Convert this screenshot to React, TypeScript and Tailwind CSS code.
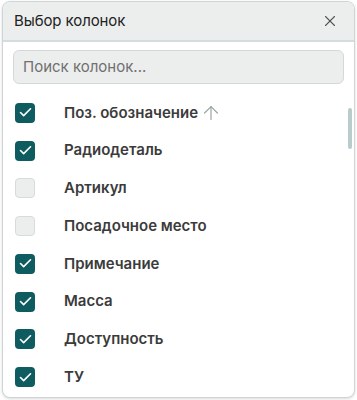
import { Check, X, ArrowUp } from "lucide-react";

const columns = [
  { name: "Поз. обозначение", checked: true, sorted: true },
  { name: "Радиодеталь", checked: true },
  { name: "Артикул", checked: false },
  { name: "Посадочное место", checked: false },
  { name: "Примечание", checked: true },
  { name: "Масса", checked: true },
  { name: "Доступность", checked: true },
  { name: "ТУ", checked: true },
];

export default function App() {
  return (
    <div className="w-[357px] h-[400px] bg-white" style={{ fontFamily: "Inter, 'Noto Sans', sans-serif" }}>
      <div className="relative ml-[2px] mt-[1px] w-[353px] h-[397px] rounded-lg border border-[#cfd5d5] bg-white shadow-[0_1px_3px_rgba(0,0,0,0.15)] overflow-hidden flex flex-col">
        {/* Header */}
        <div className="h-[40px] shrink-0 flex items-center justify-between pl-[11px] pr-[15px] bg-[#eceeee] border-b-2 border-[#d3dddd]">
          <span className="text-[15px] text-[#222] tracking-[-0.1px]">Выбор колонок</span>
          <X size={18} strokeWidth={1.5} className="text-[#555]" />
        </div>

        {/* Search */}
        <div className="px-[10px] pt-[8px]">
          <div className="h-[34px] rounded-md border border-[#d3d9d9] bg-[#eceeee] flex items-center px-[9px]">
            <span className="text-[15px] text-[#707070]">Поиск колонок...</span>
          </div>
        </div>

        {/* Scrollbar thumb */}
        <div className="absolute right-[2px] top-[106px] w-[4px] h-[41px] rounded-full bg-[#b9cccc]" />

        {/* List */}
        <div className="flex-1 pt-[10px]">
          {columns.map((c) => (
            <div key={c.name} className="h-[37.75px] flex items-center pl-[12px]">
              {c.checked ? (
                <div className="w-[20px] h-[20px] rounded-[4px] bg-[#0e5c5f] flex items-center justify-center">
                  <Check size={15} strokeWidth={2.6} className="text-white" />
                </div>
              ) : (
                <div className="w-[20px] h-[20px] rounded-[4px] bg-[#eceeee] border border-[#d6dcdc]" />
              )}
              <span className="ml-[29px] text-[15px] font-semibold text-[#3b3b3b]">{c.name}</span>
              {c.sorted && <ArrowUp size={22} strokeWidth={1.3} className="ml-[2px] text-[#9aa3a3]" />}
            </div>
          ))}
        </div>
      </div>
    </div>
  );
}
